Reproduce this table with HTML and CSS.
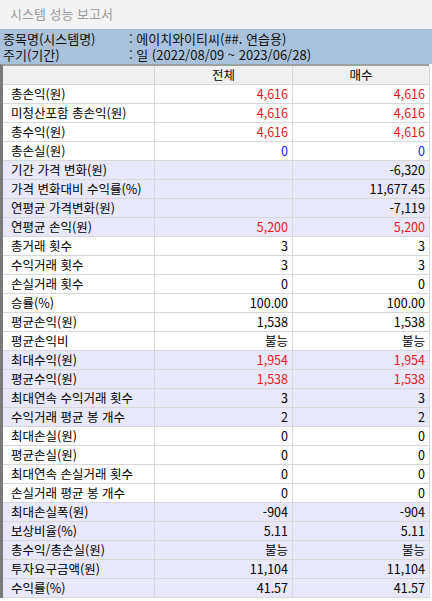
FILE: index.html
```html
<!DOCTYPE html>
<html lang="ko">
<head>
<meta charset="utf-8">
<link rel="stylesheet" href="styles.css">
</head>
<body>
<div class="titlebar">시스템 성능 보고서</div>
<div class="info">
  <div class="info-row"><span class="info-key">종목명(시스템명)</span><span class="info-val">: 에이치와이티씨(##. 연습용)</span></div>
  <div class="info-row"><span class="info-key">주기(기간)</span><span class="info-val">: 일 (2022/08/09 ~ 2023/06/28)</span></div>
</div>
<div class="grid">
  <div class="row head"><div class="c lab"></div><div class="c hc">전체</div><div class="c hc">매수</div></div>
  <div class="row"><div class="c lab">총손익(원)</div><div class="c num red">4,616</div><div class="c num red">4,616</div></div>
  <div class="row"><div class="c lab">미청산포함 총손익(원)</div><div class="c num red">4,616</div><div class="c num red">4,616</div></div>
  <div class="row"><div class="c lab">총수익(원)</div><div class="c num red">4,616</div><div class="c num red">4,616</div></div>
  <div class="row"><div class="c lab">총손실(원)</div><div class="c num blue">0</div><div class="c num blue">0</div></div>
  <div class="row alt"><div class="c lab">기간 가격 변화(원)</div><div class="c num"></div><div class="c num">-6,320</div></div>
  <div class="row alt"><div class="c lab">가격 변화대비 수익률(%)</div><div class="c num"></div><div class="c num">11,677.45</div></div>
  <div class="row alt"><div class="c lab">연평균 가격변화(원)</div><div class="c num"></div><div class="c num">-7,119</div></div>
  <div class="row alt"><div class="c lab">연평균 손익(원)</div><div class="c num red">5,200</div><div class="c num red">5,200</div></div>
  <div class="row"><div class="c lab">총거래 횟수</div><div class="c num">3</div><div class="c num">3</div></div>
  <div class="row"><div class="c lab">수익거래 횟수</div><div class="c num">3</div><div class="c num">3</div></div>
  <div class="row"><div class="c lab">손실거래 횟수</div><div class="c num">0</div><div class="c num">0</div></div>
  <div class="row"><div class="c lab">승률(%)</div><div class="c num">100.00</div><div class="c num">100.00</div></div>
  <div class="row"><div class="c lab">평균손익(원)</div><div class="c num">1,538</div><div class="c num">1,538</div></div>
  <div class="row"><div class="c lab">평균손익비</div><div class="c num">불능</div><div class="c num">불능</div></div>
  <div class="row alt"><div class="c lab">최대수익(원)</div><div class="c num red">1,954</div><div class="c num red">1,954</div></div>
  <div class="row alt"><div class="c lab">평균수익(원)</div><div class="c num red">1,538</div><div class="c num red">1,538</div></div>
  <div class="row alt"><div class="c lab">최대연속 수익거래 횟수</div><div class="c num">3</div><div class="c num">3</div></div>
  <div class="row alt"><div class="c lab">수익거래 평균 봉 개수</div><div class="c num">2</div><div class="c num">2</div></div>
  <div class="row"><div class="c lab">최대손실(원)</div><div class="c num">0</div><div class="c num">0</div></div>
  <div class="row"><div class="c lab">평균손실(원)</div><div class="c num">0</div><div class="c num">0</div></div>
  <div class="row"><div class="c lab">최대연속 손실거래 횟수</div><div class="c num">0</div><div class="c num">0</div></div>
  <div class="row"><div class="c lab">손실거래 평균 봉 개수</div><div class="c num">0</div><div class="c num">0</div></div>
  <div class="row alt"><div class="c lab">최대손실폭(원)</div><div class="c num">-904</div><div class="c num">-904</div></div>
  <div class="row alt"><div class="c lab">보상비율(%)</div><div class="c num">5.11</div><div class="c num">5.11</div></div>
  <div class="row alt"><div class="c lab">총수익/총손실(원)</div><div class="c num">불능</div><div class="c num">불능</div></div>
  <div class="row alt"><div class="c lab">투자요구금액(원)</div><div class="c num">11,104</div><div class="c num">11,104</div></div>
  <div class="row alt"><div class="c lab">수익률(%)</div><div class="c num">41.57</div><div class="c num">41.57</div></div>
</div>
</body>
</html>
```
FILE: styles.css
```css
html, body {
  margin: 0;
  padding: 0;
  background: #ffffff;
  font-family: "Noto Sans CJK KR", "Noto Sans", sans-serif;
  font-size: 12.5px;
  color: #000000;
  overflow: hidden;
}
.titlebar {
  height: 29px;
  box-sizing: border-box;
  padding: 5px 0 0 10px;
  line-height: 17px;
  background: #f3f3f3;
  color: #9a9a9a;
  font-size: 13px;
}
.info {
  height: 35px;
  box-sizing: border-box;
  padding: 2px 0 0 3px;
  background: #a7c2da;
  color: #111111;
  font-size: 13px;
}
.info-row {
  display: flex;
  height: 16px;
  line-height: 16px;
}
.info-key {
  width: 126px;
}
.grid {
  border-top: 2px solid #a0a0a0;
  border-left: 3px solid #7a7a7a;
  width: 429px;
  box-sizing: border-box;
  background: #e4e4e4;
}
.row {
  display: grid;
  grid-template-columns: 152px 138px 137px;
  background: #ffffff;
}
.row.alt {
  background: #e8e8fa;
}
.row.head {
  background: #f0f0f0;
}
.c {
  height: 19px;
  box-sizing: border-box;
  border-right: 1px solid #d8d8d8;
  border-bottom: 1px solid #d8d8d8;
  line-height: 18px;
  white-space: nowrap;
  overflow: hidden;
}
.lab {
  padding-left: 8px;
}
.hc {
  text-align: center;
}
.num {
  text-align: right;
  padding-right: 4px;
}
.red {
  color: #e8141e;
}
.blue {
  color: #1a1aff;
}
```
